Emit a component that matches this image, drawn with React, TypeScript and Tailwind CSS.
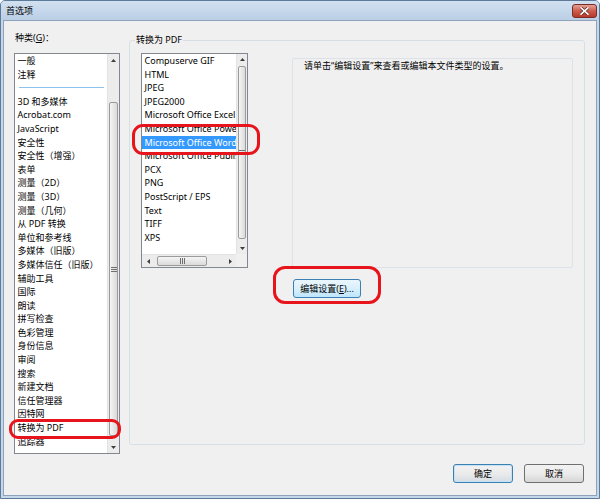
import React from "react";

type Dir = "up" | "down" | "left" | "right";

function Arrow({ dir }: { dir: Dir }) {
  const vertical = dir === "up" || dir === "down";
  const w = vertical ? 5 : 3;
  const h = vertical ? 3 : 5;
  const pts = {
    up: "0,3 2.5,0 5,3",
    down: "0,0 2.5,3 5,0",
    left: "3,0 0,2.5 3,5",
    right: "0,0 3,2.5 0,5",
  }[dir];
  return (
    <svg width={w} height={h} viewBox={`0 0 ${w} ${h}`}>
      <polygon points={pts} fill="#3d3d3d" />
    </svg>
  );
}

function GripH() {
  return (
    <svg width="6" height="5" viewBox="0 0 6 5">
      <line x1="0" y1="0.5" x2="6" y2="0.5" stroke="#6e6e6e" strokeWidth="1" />
      <line x1="0" y1="2.5" x2="6" y2="2.5" stroke="#6e6e6e" strokeWidth="1" />
      <line x1="0" y1="4.5" x2="6" y2="4.5" stroke="#6e6e6e" strokeWidth="1" />
    </svg>
  );
}

function GripV() {
  return (
    <svg width="5" height="6" viewBox="0 0 5 6">
      <line x1="0.5" y1="0" x2="0.5" y2="6" stroke="#6e6e6e" strokeWidth="1" />
      <line x1="2.5" y1="0" x2="2.5" y2="6" stroke="#6e6e6e" strokeWidth="1" />
      <line x1="4.5" y1="0" x2="4.5" y2="6" stroke="#6e6e6e" strokeWidth="1" />
    </svg>
  );
}

const leftItems: (string | null)[] = [
  "一般",
  "注释",
  null,
  "3D 和多媒体",
  "Acrobat.com",
  "JavaScript",
  "安全性",
  "安全性（增强）",
  "表单",
  "测量（2D）",
  "测量（3D）",
  "测量（几何）",
  "从 PDF 转换",
  "单位和参考线",
  "多媒体（旧版）",
  "多媒体信任（旧版）",
  "辅助工具",
  "国际",
  "朗读",
  "拼写检查",
  "色彩管理",
  "身份信息",
  "审阅",
  "搜索",
  "新建文档",
  "信任管理器",
  "因特网",
  "转换为 PDF",
  "追踪器",
];

const midItems = [
  "Compuserve GIF",
  "HTML",
  "JPEG",
  "JPEG2000",
  "Microsoft Office Excel",
  "Microsoft Office PowerPoint",
  "Microsoft Office Word",
  "Microsoft Office Publisher",
  "PCX",
  "PNG",
  "PostScript / EPS",
  "Text",
  "TIFF",
  "XPS",
];

export default function App() {
  return (
    <div
      className="relative w-[600px] h-[499px] flex flex-col bg-[#c4d7eb] border border-[#5d7a99] rounded-t-[5px] overflow-hidden text-[9px] text-black"
      style={{ fontFamily: '"Noto Sans", "Noto Sans CJK SC", sans-serif' }}
    >
      {/* Title bar */}
      <div className="h-[19px] flex items-start justify-between bg-gradient-to-b from-[#d2e1f1] to-[#bacee5] pl-[5px] pr-[2px]">
        <span className="leading-[19px]">首选项</span>
        <div className="mt-[3px] w-[25px] h-[14px] rounded-[3px] border border-[#7a2d26] bg-gradient-to-b from-[#e3a295] via-[#cc5b4c] to-[#b8392a] flex items-center justify-center">
          <svg width="9" height="8" viewBox="0 0 9 8">
            <path d="M1 0.8 L8 7.2 M8 0.8 L1 7.2" stroke="#5a2a24" strokeWidth="3" strokeLinecap="square" />
            <path d="M1 0.8 L8 7.2 M8 0.8 L1 7.2" stroke="#ffffff" strokeWidth="1.6" strokeLinecap="square" />
          </svg>
        </div>
      </div>

      {/* Body */}
      <div className="flex-1 mx-[2px] mb-[2px] bg-[#f0f0f0] border border-[#8ea3bb] flex flex-col pt-[10px] pl-[10px] pr-[11px] pb-[12px]">
        <div className="flex items-start">
          {/* Left column */}
          <div className="w-[106px] flex flex-col">
            <div className="h-[13px] leading-[13px] pl-[1px]">
              种类(<span className="underline">G</span>)：
            </div>
            <div className="mt-[9px] h-[401px] border border-[#828790] bg-white flex overflow-hidden">
              <div className="flex-1 flex flex-col overflow-hidden">
                {leftItems.map((it, i) =>
                  it === null ? (
                    <div key={i} className="h-[13.6px] shrink-0 flex items-center pl-[4px] pr-[3px]">
                      <div className="h-[1px] w-full bg-[#8cc3ee]" />
                    </div>
                  ) : (
                    <div key={i} className="h-[13.6px] shrink-0 leading-[13.6px] pl-[2.5px] whitespace-nowrap">
                      {it}
                    </div>
                  )
                )}
              </div>
              {/* V scrollbar */}
              <div className="w-[12px] flex flex-col bg-[#ececec] border-l border-[#e3e3e3]">
                <div className="h-[12px] flex items-center justify-center">
                  <Arrow dir="up" />
                </div>
                <div className="flex-1 flex flex-col">
                  <div className="mt-[36px] h-[334px] mx-[1px] rounded-[2px] border border-[#9b9b9b] bg-gradient-to-r from-[#f5f5f5] to-[#dadada] flex items-center justify-center">
                    <GripH />
                  </div>
                </div>
                <div className="h-[12px] flex items-center justify-center">
                  <Arrow dir="down" />
                </div>
              </div>
            </div>
          </div>

          {/* Group box */}
          <div className="relative ml-[9px] mt-[9px] flex-1 h-[405px] border border-[#d5dfe5] rounded-[3px] pt-[12px] pl-[11px] pr-[11px] flex items-start">
            <div className="absolute left-[5px] top-[-8px] px-[1px] bg-[#f0f0f0] leading-[13px]">转换为 PDF</div>

            {/* Middle list */}
            <div className="w-[107px] h-[215px] border border-[#828790] bg-white grid grid-cols-[1fr_11px] grid-rows-[1fr_13px] overflow-hidden">
              <div className="flex flex-col overflow-hidden">
                {midItems.map((it) => (
                  <div
                    key={it}
                    className={
                      it === "Microsoft Office Word"
                        ? "h-[13.6px] shrink-0 leading-[13.6px] pl-[2.5px] whitespace-nowrap bg-[#3399ff] text-white"
                        : "h-[13.6px] shrink-0 leading-[13.6px] pl-[2.5px] whitespace-nowrap"
                    }
                  >
                    {it}
                  </div>
                ))}
              </div>
              <div className="flex flex-col bg-[#ececec] border-l border-[#e3e3e3]">
                <div className="h-[11px] flex items-center justify-center">
                  <Arrow dir="up" />
                </div>
                <div className="flex-1 flex flex-col">
                  <div className="mt-[1px] h-[173px] mx-[1px] rounded-[2px] border border-[#9b9b9b] bg-gradient-to-r from-[#f5f5f5] to-[#dadada] flex items-center justify-center">
                    <GripH />
                  </div>
                </div>
                <div className="h-[12px] flex items-center justify-center">
                  <Arrow dir="down" />
                </div>
              </div>
              <div className="flex bg-[#ececec] border-t border-[#e3e3e3]">
                <div className="w-[12px] flex items-center justify-center">
                  <Arrow dir="left" />
                </div>
                <div className="flex-1 flex items-stretch">
                  <div className="ml-[3px] w-[50px] my-[1px] rounded-[2px] border border-[#9b9b9b] bg-gradient-to-b from-[#f5f5f5] to-[#dadada] flex items-center justify-center">
                    <GripV />
                  </div>
                </div>
                <div className="w-[12px] flex items-center justify-center">
                  <Arrow dir="right" />
                </div>
              </div>
              <div className="bg-[#f0f0f0]" />
            </div>

            {/* Right side */}
            <div className="ml-[44px] flex-1 flex flex-col items-start">
              <div className="mt-[5px] w-full h-[210px] border border-[#dde2e8] rounded-[2px] pl-[11px] leading-[13px]">
                请单击“编辑设置”来查看或编辑本文件类型的设置。
              </div>
              <button className="mt-[11px] ml-[1px] w-[68px] h-[19px] rounded-[3px] border border-[#3c7fb1] bg-gradient-to-b from-[#eaf6fd] via-[#d9f0fc] to-[#bee6fd] leading-[17px] text-center">
                编辑设置(<span className="underline">E</span>)...
              </button>
            </div>
          </div>
        </div>

        {/* Bottom buttons */}
        <div className="mt-[10px] flex justify-end gap-[11px] mr-[1px]">
          <button className="w-[60px] h-[19px] rounded-[3px] border border-[#3c7fb1] bg-gradient-to-b from-[#f2f2f2] via-[#ebebeb] to-[#d5dde3] shadow-[inset_0_0_0_1px_#c5e3f7] leading-[17px] text-center">
            确定
          </button>
          <button className="w-[60px] h-[19px] rounded-[3px] border border-[#707070] bg-gradient-to-b from-[#f2f2f2] via-[#ebebeb] to-[#d6d6d6] leading-[17px] text-center">
            取消
          </button>
        </div>
      </div>

      {/* Red annotation marks */}
      <div className="absolute left-[8px] top-[418px] w-[112px] h-[20px] rounded-[9px] border-[3px] border-[#e8141c]" />
      <div className="absolute left-[131px] top-[123px] w-[128px] h-[31px] rounded-[11px] border-[3px] border-[#e8141c]" />
      <div className="absolute left-[272px] top-[265px] w-[108px] h-[38px] rounded-[12px] border-[3px] border-[#e8141c]" />
    </div>
  );
}
